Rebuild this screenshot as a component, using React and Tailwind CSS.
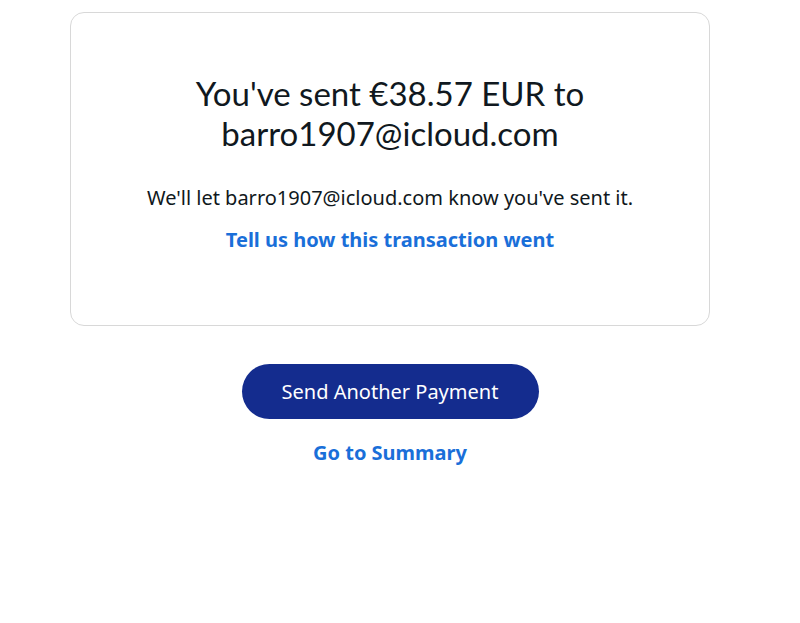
export default function App() {
  return (
    <div className="w-[780px] bg-white pt-[12px] text-[#101820]" style={{ fontFamily: "'Noto Sans', Lato, sans-serif" }}>
      <div className="mx-auto flex h-[314px] w-[640px] flex-col items-center rounded-[14px] border border-[#d8d8d8] pt-[60px] text-center">
        <h1 className="text-[33px] leading-[40px] font-normal" style={{ fontFamily: "Lato, sans-serif" }}>
          You've sent €38.57 EUR to
          <br />
          barro1907@icloud.com
        </h1>
        <p className="mt-[32px] text-[20px] leading-[26px]">We'll let barro1907@icloud.com know you've sent it.</p>
        <a href="#" className="mt-[16px] text-[20px] leading-[26px] font-bold text-[#1a6fd9]">
          Tell us how this transaction went
        </a>
      </div>

      <div className="mt-[38px] flex flex-col items-center">
        <button className="h-[55px] w-[297px] rounded-full bg-[#142c8e] text-[20px] text-white">
          Send Another Payment
        </button>
        <a href="#" className="mt-[21px] text-[20px] leading-[26px] font-bold text-[#1a6fd9]">
          Go to Summary
        </a>
      </div>
    </div>
  );
}
